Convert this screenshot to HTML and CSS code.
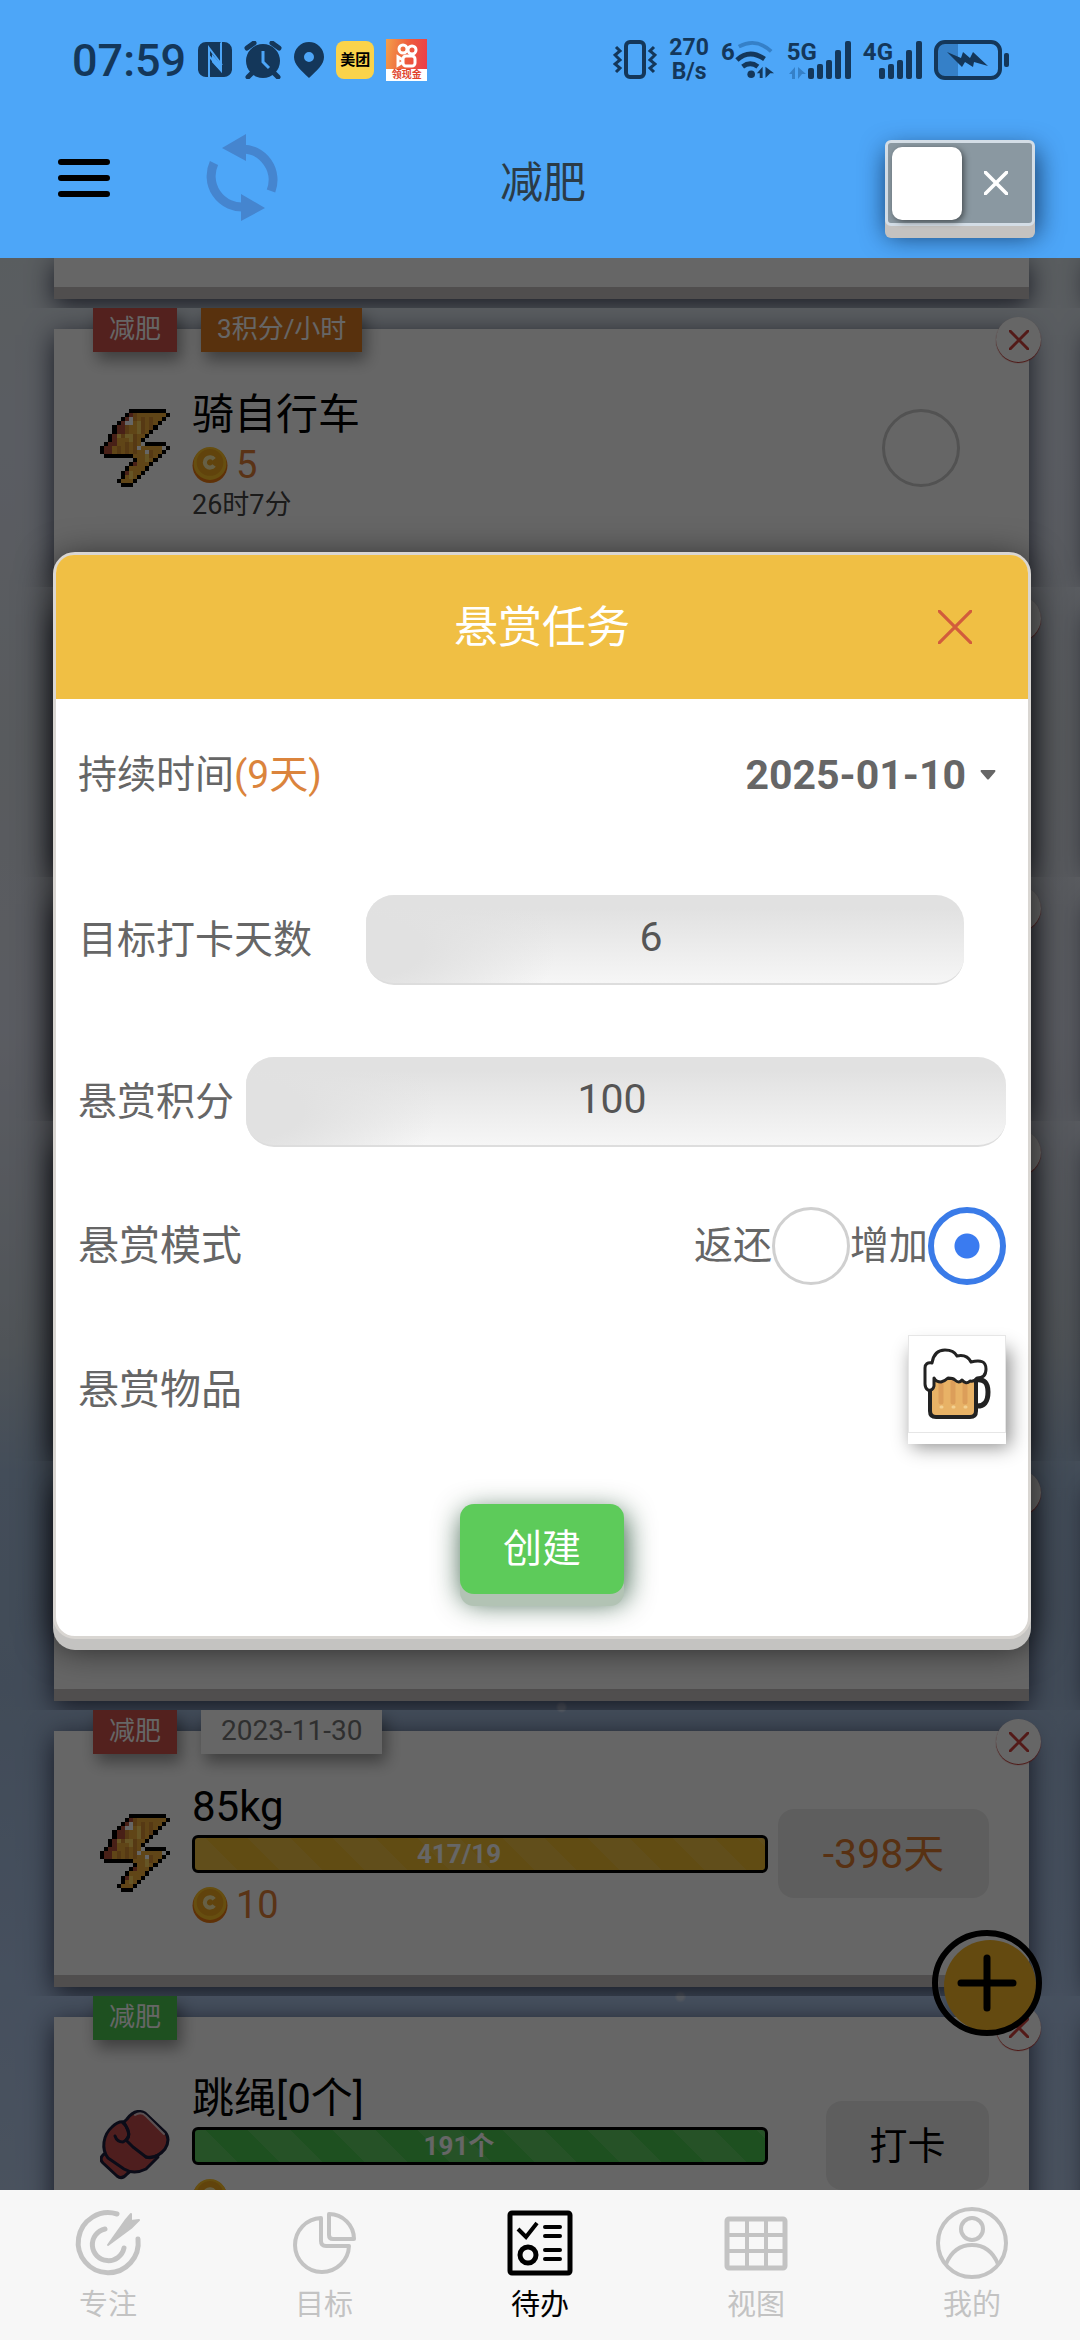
FILE: index.html
```
<!DOCTYPE html>
<html lang="zh-CN">
<head>
    <meta charset="UTF-8">
    <meta name="viewport" content="width=device-width, initial-scale=1.0">
    <title>减肥</title>
    <link rel="stylesheet" href="styles.css">
</head>
<body>
    <!-- shared icons -->
    <svg class="sprite" aria-hidden="true">
        <symbol id="bolt" viewBox="0 0 17 19">
            <g shape-rendering="crispEdges">
                <path fill="#f0ad3a" d="M7 1h9v1h-1v1h-1v1h-1v1h-1v1h-1v1h-1v2h5v1h1v1h-1v1h-1v1h-1v1h-1v1h-1v1h-1v1h-1v1h-2v1H5v-2h1v-2h1v-1h1v-2H1V9h1V7h1V4h1V3h1V2h2z"/>
                <path fill="#b5503a" d="M7 1h1v2H6v3H4v3H3v2H1V9h1V7h1V4h1V3h1V2h2zM8 12h1v2H7v2H6v-2h1v-1h1z"/>
                <path fill="#d88f34" d="M8 1h1v2H8zM6 4h1v2H6zM5 6h1v1H5zM4 9h1v2H4zM10 2h1v4h-1zM12 2h1v3h-1zM8 6h1v5H8zM6 8h1v3H6zM12 10h1v2h-1z"/>
                <path fill="#ffd45e" d="M9 3h1v3H9zM7 6h1v2H7zM6 6h1v1H6zM4 6h1v1H4zM11 11h1v2h-1zM7 15h1v2H7z"/>
                <path fill="#ffffff" d="M7 2h1v2H6V3h1zM9 9h1v1H9zM11 10h1v1h-1z"/>
                <path fill="#000" d="M7 0h9v1H7zM6 1h1v1H6zM16 1h1v1h-1zM5 2h1v1H5zM15 2h1v1h-1zM4 3h1v1H4zM14 3h1v1h-1zM3 4h1v2H3zM13 4h1v1h-1zM12 5h1v1h-1zM2 6h1v2H2zM11 6h1v1h-1zM10 7h1v1h-1zM1 8h1v1H1zM11 8h5v1h-5zM0 9h1v2H0zM16 9h1v1h-1zM15 10h1v1h-1zM1 11h7v1H1zM14 11h1v1h-1zM8 12h1v1H8zM13 12h1v1h-1zM7 13h1v1H7zM12 13h1v1h-1zM6 14h1v1H6zM11 14h1v1h-1zM5 15h1v2H5zM10 15h1v1h-1zM9 16h1v1H9zM4 17h1v1H4zM8 17h1v1H8zM5 18h3v1H5z"/>
            </g>
        </symbol>
        <symbol id="coin" viewBox="0 0 34 35">
            <circle cx="17" cy="18" r="17" fill="#ee7c12"/>
            <circle cx="17" cy="16" r="16" fill="#ffc428"/>
            <circle cx="17" cy="15" r="13" fill="#f3a81e"/>
            <path d="M21 12a5 5 0 1 0 0 6" fill="none" stroke="#fff0b0" stroke-width="4"/>
        </symbol>
        <symbol id="cross" viewBox="0 0 20 20">
            <path d="M1 1l18 18M19 1L1 19" fill="none" stroke="currentColor" stroke-width="3" stroke-linecap="round"/>
        </symbol>
        <symbol id="thin-cross" viewBox="0 0 32 32">
            <path d="M1 1l30 30M31 1L1 31" fill="none" stroke="currentColor" stroke-width="3" stroke-linecap="round"/>
        </symbol>
    </svg>

    <div class="top">
        <div class="status">
            <span class="clock">07:59</span>
            <svg width="34" height="36" viewBox="0 0 34 36">
                <path fill="currentColor" d="M8 0h14l6 6v22l-14-16v23H8a8 8 0 0 1-8-7V8a8 8 0 0 1 8-8z"/>
                <path fill="currentColor" d="M24 0h2a8 8 0 0 1 8 8v20a8 8 0 0 1-8 7H12V18l12 13z"/>
                <path fill="none" stroke="#4da6f8" stroke-width="2" d="M11 35V6l13 17M23 1v27L11 14"/>
            </svg>
            <svg width="38" height="38" viewBox="0 0 38 38">
                <circle cx="19" cy="20" r="17" fill="currentColor"/>
                <path stroke="currentColor" stroke-width="5" stroke-linecap="round" d="M3 7l7-5M35 7l-7-5M8 32l-4 4M30 32l4 4"/>
                <path fill="none" stroke="#4da6f8" stroke-width="3" d="M19 10v11l6 6"/>
            </svg>
            <svg width="30" height="36" viewBox="0 0 30 36">
                <path fill="currentColor" fill-rule="evenodd" d="M15 0a15 15 0 0 1 15 15c0 8-7 13-15 21C7 28 0 23 0 15A15 15 0 0 1 15 0zm0 10a5 5 0 1 0 0 10 5 5 0 0 0 0-10z"/>
            </svg>
            <span class="app-meituan">美团</span>
            <span class="app-kuaishou">
                <svg width="24" height="26" viewBox="0 0 24 26" fill="none" stroke="#fff" stroke-width="3">
                    <circle cx="8" cy="6" r="4"/><circle cx="17" cy="7" r="4"/>
                    <rect x="8" y="13" width="12" height="10" rx="3"/><path d="M8 17l-5-3v8l5-3"/>
                </svg>
                <b>领现金</b>
            </span>
            <span class="space"></span>
            <svg width="44" height="40" viewBox="0 0 44 40" fill="none" stroke="currentColor">
                <rect x="13" y="2" width="18" height="35" rx="4" stroke-width="4"/>
                <path stroke-width="3" d="M3 7l4 4-5 4 5 5-5 4 5 4-4 4M41 7l-4 4 5 4-5 5 5 4-5 4 4 4"/>
            </svg>
            <span class="speed">270<br>B/s</span>
            <span class="net">
                <b>6</b>
                <svg width="40" height="40" viewBox="0 0 42 40" fill="none" stroke="currentColor">
                    <path stroke="#3580c8" stroke-width="4" d="M4 6q18-10 34 5"/>
                    <path stroke-width="5" d="M2 20q13-12 29-1M8 27q8-6 16 0"/>
                    <circle cx="17" cy="35" r="4" fill="currentColor" stroke="none"/>
                    <path fill="currentColor" stroke="none" d="M23 34l6-7v12h-3v-5zM32 27l9 7h-4l-5 5z"/>
                </svg>
            </span>
            <span class="net">
                <b>5G</b>
                <svg class="bars" width="62" height="40" viewBox="0 0 62 40" fill="currentColor">
                    <path fill="#3580c8" d="M0 34l6-7v12H3v-5zM9 27l8 7h-4l-4 5z"/>
                    <rect x="19" y="28" width="6" height="11" rx="2"/><rect x="28" y="24" width="6" height="15" rx="2"/>
                    <rect x="37" y="20" width="6" height="19" rx="2"/><rect x="46" y="10" width="6" height="29" rx="2"/>
                    <rect x="56" y="1" width="6" height="38" rx="2"/>
                </svg>
            </span>
            <span class="net">
                <b>4G</b>
                <svg class="bars" width="57" height="40" viewBox="5 0 57 40" fill="currentColor">
                    <rect x="19" y="28" width="6" height="11" rx="2"/><rect x="28" y="24" width="6" height="15" rx="2"/>
                    <rect x="37" y="20" width="6" height="19" rx="2"/><rect x="46" y="10" width="6" height="29" rx="2"/>
                    <rect x="56" y="1" width="6" height="38" rx="2"/>
                </svg>
            </span>
            <svg width="76" height="40" viewBox="0 0 76 40">
                <path fill="#3580c8" d="M4 4h20v32H4z"/>
                <rect x="2" y="2" width="64" height="36" rx="9" fill="none" stroke="currentColor" stroke-width="4"/>
                <rect x="70" y="13" width="5" height="14" rx="2" fill="currentColor"/>
                <path fill="currentColor" d="M13 12l14 6 2-6 7 6 3-6 15 14-14-4-1 5-8-5-3 5z"/>
            </svg>
        </div>
        <header class="header">
            <button class="menu" aria-label="菜单">
                <svg width="54" height="40" viewBox="0 0 54 40">
                    <path stroke="#000" stroke-width="6" stroke-linecap="round" d="M4 4h46M4 20h46M4 36h46"/>
                </svg>
            </button>
            <button class="sync" aria-label="同步">
                <svg width="72" height="88" viewBox="0 0 72 88">
                    <path fill="none" stroke="#4585cf" stroke-width="9" d="M36 15a31 31 0 0 1 29 42M8 29a31 31 0 0 0 30 44"/>
                    <path fill="#4585cf" d="M40 0v27L16 14zM35 60v27l24-13z"/>
                </svg>
            </button>
            <h1>减肥</h1>
            <label class="toggle">
                <input type="checkbox" aria-label="切换">
                <span class="knob"></span>
                <svg width="24" height="24"><use href="#cross"/></svg>
            </label>
        </header>
    </div>

    <main class="list">
        <section class="task task-end"><article class="card"></article></section>

        <section class="task h-279">
            <div class="tags"><span class="tag red">减肥</span><span class="tag orange">3积分/小时</span></div>
            <button class="del" aria-label="删除"><svg width="20" height="20"><use href="#cross"/></svg></button>
            <article class="card">
                <svg class="pic" width="70" height="78"><use href="#bolt"/></svg>
                <div class="info timed">
                    <h2>骑自行车</h2>
                    <p class="coins"><svg width="36" height="36"><use href="#coin"/></svg>5</p>
                    <p class="time">26时7分</p>
                </div>
                <div class="side"><input class="check" type="checkbox" aria-label="完成骑自行车"></div>
            </article>
        </section>

        <section class="task h-290">
            <button class="del" aria-label="删除"></button>
            <article class="card"></article>
        </section>
        <section class="task h-244">
            <button class="del" aria-label="删除"></button>
            <article class="card"></article>
        </section>
        <section class="task h-340">
            <button class="del" aria-label="删除"></button>
            <article class="card"></article>
        </section>
        <section class="task h-249">
            <button class="del" aria-label="删除"></button>
            <article class="card"></article>
        </section>

        <section class="task h-286">
            <div class="tags"><span class="tag red">减肥</span><span class="tag date">2023-11-30</span></div>
            <button class="del" aria-label="删除"><svg width="20" height="20"><use href="#cross"/></svg></button>
            <article class="card">
                <svg class="pic" width="70" height="78"><use href="#bolt"/></svg>
                <div class="info">
                    <h2>85kg</h2>
                    <div class="bar yellow">417/19</div>
                    <p class="coins"><svg width="36" height="36"><use href="#coin"/></svg>10</p>
                </div>
                <div class="side"><button class="box wide">-398天</button></div>
            </article>
        </section>

        <section class="task h-298">
            <div class="tags"><span class="tag green">减肥</span></div>
            <button class="del" aria-label="删除"><svg width="20" height="20"><use href="#cross"/></svg></button>
            <article class="card">
                <svg class="pic" width="70" height="70" viewBox="0 0 70 70">
                    <g fill="#c44c4c" stroke="#1c1e3c" stroke-width="3" stroke-linejoin="round" stroke-linecap="round">
                        <path d="M8 41l27 16-8 7q-5 6-10 2L3 53q-4-4 0-8z"/>
                        <path d="M24 12q-6-1-12 5c-9 8-11 22-4 31l16 11q10 6 22 0l12-12L40 20z"/>
                        <path d="M27 9q8-11 18-6l20 19q6 7 0 17-8 10-19 8L33 37l-7-7q4-3 2-9l-4-9z"/>
                        <path fill="none" d="M15 26q2 6 8 6 8-4 5-12-2-5-5-7M46 47q6 2 12-2"/>
                    </g>
                    <path fill="none" stroke="#e2c8cc" stroke-width="2" stroke-linecap="round" d="M35 5q6-4 11 1l18 18"/>
                </svg>
                <div class="info">
                    <h2>跳绳[0个]</h2>
                    <div class="bar lime">191个</div>
                    <p class="coins"><svg width="36" height="36"><use href="#coin"/></svg></p>
                </div>
                <div class="side"><button class="box">打卡</button></div>
            </article>
        </section>

        <button class="fab" aria-label="新增">
            <svg width="110" height="106" viewBox="0 0 110 106">
                <ellipse cx="55" cy="53" rx="51" ry="50" fill="none" stroke="#fff" stroke-opacity=".35" stroke-width="6"/>
                <circle cx="58" cy="56" r="46" fill="#fbb829"/>
                <ellipse cx="55" cy="53" rx="52" ry="50" fill="none" stroke="#000" stroke-width="6"/>
                <path stroke="#000" stroke-width="7" stroke-linecap="round" d="M55 28v50M29 53h52"/>
            </svg>
        </button>

        <div class="mask">
            <form class="dialog" role="dialog" aria-labelledby="dialog-title">
                <div class="dialog-head">
                    <h2 id="dialog-title">悬赏任务</h2>
                    <button type="button" class="close" aria-label="关闭"><svg width="34" height="34"><use href="#thin-cross"/></svg></button>
                </div>
                <div class="dialog-body">
                    <div class="row row-date">
                        <span class="name">持续时间<em>(9天)</em></span>
                        <button type="button" class="picker">2025-01-10<svg width="16" height="10" viewBox="0 0 16 10"><path fill="currentColor" d="M1 0h14q1 1 0 2L9 9q-1 1-2 0L1 2q-1-1 0-2z"/></svg></button>
                    </div>
                    <div class="row row-days">
                        <label class="name" for="days">目标打卡天数</label>
                        <input class="field" id="days" type="text" inputmode="numeric" value="6">
                    </div>
                    <div class="row row-score">
                        <label class="name" for="score">悬赏积分</label>
                        <input class="field" id="score" type="text" inputmode="numeric" value="100">
                    </div>
                    <div class="row row-mode">
                        <span class="name big">悬赏模式</span>
                        <div class="modes">
                            <label class="name" for="mode-return">返还</label><input class="radio" type="radio" name="mode" id="mode-return">
                            <label class="name" for="mode-add">增加</label><input class="radio" type="radio" name="mode" id="mode-add" checked>
                        </div>
                    </div>
                    <div class="row row-item">
                        <span class="name big">悬赏物品</span>
                        <button type="button" class="item" aria-label="啤酒">
                            <svg width="68" height="72" viewBox="0 0 68 72">
                                <path fill="none" stroke="#222" stroke-width="5" d="M53 32q12-2 12 12 0 15-12 14"/>
                                <path fill="#e8b266" stroke="#222" stroke-width="4" d="M7 30h46v33q0 6-6 6H13q-6 0-6-6z"/>
                                <path stroke="#dc9e5a" stroke-width="5" stroke-linecap="round" d="M18 36v18M30 34v20M42 36v18"/>
                                <path stroke="#f3d090" stroke-width="3" stroke-linecap="round" d="M18 59h1M30 59h1M42 59h1"/>
                                <path fill="#fff" stroke="#222" stroke-width="3" stroke-linejoin="round" d="M2 20q0-6 7-5Q11 2 22 2q9 0 12 6 10-2 14 6 15-4 15 7 0 9-9 9-3 4-7 3-4 4-8-1-3 4-7 0-2-2-7-2-3 3-7 4-5 0-7-4v8q-1 5-6 4-3-2-3-6z"/>
                            </svg>
                        </button>
                    </div>
                    <button type="button" class="create">创建</button>
                </div>
            </form>
        </div>
    </main>

    <nav class="tabs">
        <a href="#focus">
            <svg width="72" height="72" viewBox="0 0 72 72" fill="none" stroke="currentColor" stroke-width="5" stroke-linecap="round">
                <path d="M45 7A30 30 0 1 0 66 32M33 22a16 16 0 1 0 19 19"/>
                <path fill="currentColor" stroke-width="2" stroke-linejoin="round" d="M36 38l17-24 6-7v7l8-1-8 8z"/>
            </svg>
            专注
        </a>
        <a href="#goal">
            <svg width="72" height="72" viewBox="0 0 72 72" fill="none" stroke="currentColor" stroke-width="4" stroke-linejoin="round">
                <path d="M33 11A27 27 0 1 0 61 39H38q-5 0-5-5z"/>
                <path d="M41 7a25 25 0 0 1 25 25H45q-4 0-4-4z"/>
            </svg>
            目标
        </a>
        <a href="#todo" class="on">
            <svg width="72" height="72" viewBox="0 0 72 72" fill="none" stroke="currentColor" stroke-width="4">
                <rect x="6" y="6" width="60" height="60" rx="2" stroke-width="5"/>
                <path d="M14 22l8 8 11-14" stroke-width="4"/>
                <circle cx="24" cy="48" r="8" stroke-width="5"/>
                <path stroke-linecap="round" d="M41 20h15M41 29h15M41 43h15M41 52h15"/>
            </svg>
            待办
        </a>
        <a href="#view">
            <svg width="72" height="72" viewBox="0 0 72 72" fill="none" stroke="currentColor" stroke-width="5">
                <rect x="7" y="12" width="58" height="49" rx="2"/>
                <path stroke-width="4" d="M27 12v49M46 12v49M7 28h58M7 44h58"/>
            </svg>
            视图
        </a>
        <a href="#me">
            <svg width="72" height="72" viewBox="0 0 72 72" fill="none" stroke="currentColor" stroke-width="4">
                <circle cx="36" cy="36" r="34"/>
                <circle cx="36" cy="22" r="11"/>
                <path d="M10 57Q18 38 36 38t26 19"/>
            </svg>
            我的
        </a>
    </nav>
</body>
</html>
```
FILE: styles.css
```
* {
    box-sizing: border-box;
}
body {
    margin: 0;
    height: 100vh;
    display: flex;
    flex-direction: column;
    overflow: hidden;
    font-family: Roboto, "Noto Sans CJK SC", sans-serif;
    color: #000;
}
h1, h2, p {
    margin: 0;
    font-weight: 400;
}
button {
    font-family: inherit;
    border: none;
    padding: 0;
    background: none;
    color: inherit;
    cursor: pointer;
}
svg {
    display: block;
    flex: none;
}
.sprite {
    position: absolute;
    width: 0;
    height: 0;
}

/* status bar + header */
.top {
    background: #4da6f8;
    height: 258px;
    flex: none;
    padding-top: 34px;
}
.status {
    height: 52px;
    padding: 0 70px 0 72px;
    display: flex;
    align-items: center;
    gap: 12px;
    color: #14375a;
}
.clock {
    font-size: 45px;
    font-weight: 500;
}
.space {
    flex: 1;
}
.app-meituan {
    width: 38px;
    height: 38px;
    border-radius: 8px;
    background: #fad34b;
    color: #000;
    font-size: 15px;
    font-weight: 700;
    line-height: 38px;
    text-align: center;
}
.app-kuaishou {
    width: 41px;
    height: 42px;
    padding-top: 4px;
    display: flex;
    flex-direction: column;
    align-items: center;
    background: linear-gradient(100deg, #f3a04a, #ee5b3c 50%, #ea3a4c);
}
.app-kuaishou b {
    align-self: stretch;
    background: #fff;
    color: #e0432c;
    font-size: 10px;
    line-height: 12px;
    text-align: center;
}
.speed {
    font-size: 23px;
    font-weight: 700;
    line-height: 24px;
    text-align: center;
}
.net {
    display: flex;
    align-items: flex-start;
}
.net b {
    font-size: 24px;
    line-height: 24px;
}
.net .bars {
    margin-left: -28px;
}
.header {
    height: 172px;
    padding: 0 45px 0 57px;
    display: flex;
    align-items: center;
}
.header h1 {
    flex: 1;
    text-align: center;
    font-size: 43px;
    padding: 14px 77px 0 0;
    color: #2b3b47;
}
.menu {
    margin-top: 12px;
}
.sync {
    margin: 12px 0 0 95px;
}
.toggle {
    width: 150px;
    height: 86px;
    margin-top: 22px;
    padding: 0 24px 0 4px;
    display: flex;
    align-items: center;
    justify-content: space-between;
    border: 3px solid #d3dde6;
    border-radius: 6px;
    background: #8a98a1;
    color: #fff;
    box-shadow: 0 12px 0 #c4c2c0, 2px 10px 26px rgba(0, 20, 50, 0.75);
}
.toggle input {
    position: absolute;
    opacity: 0;
}
.knob {
    width: 70px;
    height: 73px;
    border-radius: 10px;
    background: #fff;
    box-shadow: 2px 2px 6px rgba(0, 0, 0, 0.5);
}

/* task list */
.list {
    flex: 1;
    min-height: 0;
    overflow: hidden;
    position: relative;
    background:
        radial-gradient(circle at 52% 75%, #d5e0f2 3px, transparent 6px),
        radial-gradient(circle at 63% 90%, #d5e0f2 3px, transparent 6px),
        linear-gradient(180deg, #dfe8ee 0%, #e2e8f6 10%, #dde3ea 25%, #e2e6f4 40%, #c9d3dd 56%, #a8c0de 63%, #a4bcdc 74%, #b0c8ec 90%, #b8cdec 100%);
}
.task {
    position: relative;
    padding: 21px 51px 9px 54px;
    display: flex;
    overflow: hidden;
}
.task-end {
    height: 50px;
    padding-top: 0;
}
.h-244 { height: 244px; }
.h-249 { height: 249px; }
.h-279 { height: 279px; }
.h-286 { height: 286px; }
.h-290 { height: 290px; }
.h-298 { height: 298px; }
.h-340 { height: 340px; }
.card {
    flex: 1;
    min-width: 0;
    padding: 0 40px 0 39px;
    display: flex;
    align-items: center;
    background: #fff;
    border-bottom: 12px solid #c9c4c4;
    box-shadow: 0 6px 26px rgba(20, 25, 50, 0.8), 1035px 6px 26px rgba(20, 25, 50, 0.8);
}
.tags {
    position: absolute;
    top: 0;
    left: 93px;
    display: flex;
    gap: 24px;
}
.tag {
    height: 44px;
    padding: 0 16px;
    font-size: 26px;
    line-height: 42px;
    color: #fff;
    box-shadow: 4px 8px 16px rgba(0, 0, 0, 0.4);
}
.red { background: #cf534b; }
.orange { background: #dd7a22; }
.green { background: #4dc750; }
.date {
    padding: 0 20px;
    background: #fff;
    font-size: 28px;
    color: #777;
}
.del {
    position: absolute;
    top: 9px;
    right: 39px;
    width: 45px;
    height: 45px;
    display: flex;
    align-items: center;
    justify-content: center;
    border-radius: 50%;
    background: #fff;
    color: #d0433c;
    box-shadow: 0 1px 1px #c0302a;
}
.pic {
    margin: 0 22px 0 7px;
}
.info {
    flex: 1;
    min-width: 0;
}
.info h2 {
    font-size: 42px;
    line-height: 56px;
}
.coins {
    display: flex;
    align-items: center;
    gap: 8px;
    height: 44px;
    margin-top: 10px;
    font-size: 38px;
    color: #e08038;
}
.timed {
    padding-top: 14px;
}
.timed .coins {
    margin-top: 0;
}
.time {
    font-size: 27px;
    line-height: 36px;
    color: #444;
}
.side {
    width: 221px;
    display: flex;
    justify-content: flex-end;
}
.check {
    appearance: none;
    width: 78px;
    height: 78px;
    margin: 0 29px 0 0;
    border: 3px solid #ccc;
    border-radius: 50%;
}
.bar {
    height: 38px;
    padding-right: 42px;
    border: 3px solid #000;
    border-radius: 6px;
    font-size: 26px;
    font-weight: 700;
    line-height: 32px;
    text-align: center;
    color: #fff;
    background-image: repeating-linear-gradient(45deg, rgba(255, 255, 255, 0.1) 0, rgba(255, 255, 255, 0.1) 30px, transparent 30px, transparent 60px);
}
.yellow { background-color: #f2bd30; }
.lime { background-color: #4dc750; }
.box {
    width: 163px;
    height: 89px;
    padding-bottom: 6px;
    border-radius: 16px;
    background: #ececec;
    font-size: 38px;
}
.wide {
    width: 211px;
    font-size: 41px;
    color: #dd7a30;
}
.fab {
    position: absolute;
    right: 38px;
    bottom: 154px;
}

/* dialog */
.mask {
    position: absolute;
    inset: 0;
    padding: 294px 49px 0 53px;
    background: rgba(0, 0, 0, 0.6);
}
.dialog {
    border: 3px solid #d9d6d2;
    border-radius: 22px;
    background: #fff;
    box-shadow: 0 11px 0 #c4c3c1, 0 8px 36px rgba(0, 0, 0, 0.7);
    color: #666;
    font-size: 39px;
}
.dialog-head {
    display: flex;
    align-items: center;
    height: 144px;
    padding: 0 56px;
    border-radius: 18px 18px 0 0;
    background: #f0bf44;
}
.dialog-head h2 {
    flex: 1;
    padding: 0 0 6px 34px;
    text-align: center;
    font-size: 44px;
    color: #fff;
}
.close {
    color: #d25c3c;
}
.dialog-body {
    padding: 0 22px 42px;
    display: flex;
    flex-direction: column;
}
.row {
    display: flex;
    align-items: center;
    justify-content: space-between;
}
.row em {
    font-style: normal;
    color: #db843c;
}
.name {
    padding-bottom: 8px;
}
.row-date {
    height: 152px;
    padding-right: 10px;
}
.picker {
    display: flex;
    align-items: center;
    gap: 14px;
    font-size: 41px;
    font-weight: 700;
}
.row-days {
    height: 90px;
    margin-top: 44px;
    padding-right: 42px;
    gap: 54px;
}
.row-score {
    height: 90px;
    margin-top: 72px;
    gap: 12px;
}
.field {
    flex: 1;
    min-width: 0;
    height: 90px;
    padding: 0 28px 4px 0;
    border: none;
    border-bottom: 2px solid #ddd;
    border-radius: 28px;
    background: radial-gradient(ellipse 190px 100px at 0 60%, #e1e1e1 30%, rgba(225, 225, 225, 0) 100%), linear-gradient(180deg, #e1e1e1 15%, #f6f6f6 100%);
    font-family: inherit;
    font-size: 41px;
    text-align: center;
    color: #555;
}
.big {
    font-size: 41px;
}
.row-mode {
    height: 78px;
    margin-top: 60px;
}
.modes {
    display: flex;
    align-items: center;
}
.radio {
    appearance: none;
    width: 78px;
    height: 78px;
    margin: 0;
    border: 3px solid #d0d0d0;
    border-radius: 50%;
    background: #fff;
}
.radio:checked {
    border: 6px solid #3a7be8;
    background: radial-gradient(circle, #3a7bf0 12px, #fff 13px);
}
.row-item {
    height: 109px;
    margin-top: 50px;
}
.item {
    width: 98px;
    height: 98px;
    margin-bottom: 11px;
    display: flex;
    align-items: center;
    justify-content: center;
    border: 1px solid #e6e6e6;
    background: #fff;
    box-shadow: 0 11px 0 #fff, 4px 14px 18px rgba(0, 0, 0, 0.45);
}
.create {
    align-self: center;
    width: 164px;
    height: 90px;
    margin-top: 60px;
    padding-bottom: 8px;
    border-radius: 14px;
    background: #5dcb5a;
    color: #fff;
    font-size: 39px;
    box-shadow: 0 12px 0 #b2c3b4, 2px 8px 28px rgba(0, 50, 20, 0.8);
}

/* bottom tabs */
.tabs {
    display: flex;
    flex: none;
    height: 150px;
    background: #f7f7f7;
}
.tabs a {
    flex: 1;
    padding-top: 17px;
    display: flex;
    flex-direction: column;
    align-items: center;
    font-size: 29px;
    line-height: 52px;
    color: #c3c3c3;
    text-decoration: none;
}
.tabs .on {
    color: #000;
}
```
